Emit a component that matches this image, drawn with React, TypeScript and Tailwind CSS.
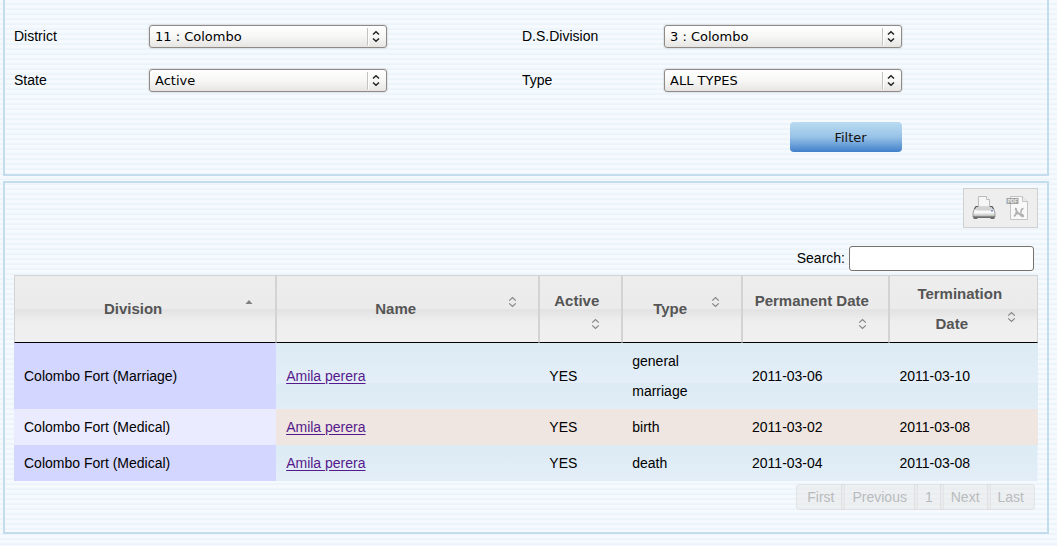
import { useState } from "react";

type Key = "division" | "name" | "active" | "type" | "permanent" | "termination";
type Row = Record<Key, string>;

const columns: { key: Key; label: string; width: string }[] = [
  { key: "division", label: "Division", width: "w-[25.6%]" },
  { key: "name", label: "Name", width: "w-[25.7%]" },
  { key: "active", label: "Active", width: "w-[8.1%]" },
  { key: "type", label: "Type", width: "w-[11.7%]" },
  { key: "permanent", label: "Permanent Date", width: "w-[14.4%]" },
  { key: "termination", label: "Termination Date", width: "w-[14.5%]" },
];

const records: Row[] = [
  { division: "Colombo Fort (Marriage)", name: "Amila perera", active: "YES", type: "general marriage", permanent: "2011-03-06", termination: "2011-03-10" },
  { division: "Colombo Fort (Medical)", name: "Amila perera", active: "YES", type: "birth", permanent: "2011-03-02", termination: "2011-03-08" },
  { division: "Colombo Fort (Medical)", name: "Amila perera", active: "YES", type: "death", permanent: "2011-03-04", termination: "2011-03-08" },
];

const pages = ["First", "Previous", "1", "Next", "Last"];

function SelectField({ id, label, options }: { id: string; label: string; options: string[] }) {
  return (
    <>
      <label htmlFor={id}>{label}</label>
      <div className="relative w-[238px]">
        <select
          id={id}
          className="block h-[23px] w-full appearance-none rounded-[3px] border border-[#8f8a85] bg-linear-to-b from-white via-[#f7f7f6] to-[#e6e5e3] pt-px pr-6 pl-[5px] font-['DejaVu_Sans',sans-serif] text-[13px] leading-5 text-black shadow-[0_0_1px_1px_rgba(0,0,0,0.08)]"
        >
          {options.map((o) => (
            <option key={o}>{o}</option>
          ))}
        </select>
        <svg className="pointer-events-none absolute top-[2px] right-1 h-[19px] w-4" viewBox="0 0 16 19" fill="none" aria-hidden="true">
          <path d="M0.5 1V18.5" stroke="#c4c2c0" />
          <path d="M1.500 1V18.5" stroke="#fff" />
          <path d="M6 7.5L9 4.8L12 7.5M6 11.500L9 14.200L12 11.500" stroke="#222" strokeWidth="1.500" />
        </svg>
      </div>
    </>
  );
}

function SortIcon({ dir }: { dir: "asc" | "desc" | null }) {
  return (
    <svg className="float-right size-4" viewBox="0 0 16 16" fill="none" aria-hidden="true">
      {dir === "asc" && <path d="M4.500 10L8 6L11.500 10Z" fill="#808080" />}
      {dir === "desc" && <path d="M4.500 6L8 10L11.500 6Z" fill="#808080" />}
      {dir === null && <path d="M5.200 6.600L8.500 3.500L11.800 6.600M5.200 9.400L8.500 12.500L11.800 9.400" stroke="#858585" strokeWidth="1.200" />}
    </svg>
  );
}

function PrinterIcon() {
  return (
    <svg className="block h-[26px] w-[26px]" viewBox="0 0 26 26" aria-hidden="true">
      <defs>
        <linearGradient id="printerBody" x1="0" y1="0" x2="0" y2="1">
          <stop offset="0" stopColor="#c4c4c4" />
          <stop offset="0.35" stopColor="#e4e4e4" />
          <stop offset="0.6" stopColor="#f8f8f8" />
          <stop offset="1" stopColor="#a8a8a8" />
        </linearGradient>
      </defs>
      <path d="M7.500 12V1.500H15.500L18.500 4.500V12Z" fill="#f6f6f6" stroke="#bdbdbd" />
      <path d="M15.500 1.500V4.500H18.500" fill="#fff" stroke="#bdbdbd" />
      <path d="M5 11.500H7L8 13H18L19 11.500H21L22.500 13.500L24 18V22H2V18L3.500 13.500Z" fill="url(#printerBody)" stroke="#9a9a9a" />
      <path d="M3.500 14L5 11.500H7M19 11.500H21L22.500 14" fill="none" stroke="#5f5f5f" strokeWidth="1.200" />
      <path d="M7 12L6 15.500H20L19 12Z" fill="#d2d2d2" />
      <path d="M3 16.500H23" stroke="#fbfbfb" strokeWidth="1.500" />
      <path d="M2 21.500H24V22.500L23 24H20L19 23H7L6 24H3L2 22.500Z" fill="#6c6c6c" />
      <rect x="20" y="15" width="2" height="1.500" fill="#6f92d4" />
    </svg>
  );
}

function PdfIcon() {
  return (
    <svg className="block h-[26px] w-[26px]" viewBox="0 0 26 26" aria-hidden="true">
      <path d="M5.500 1.500H17.500L22.500 6.500V24.500H5.500Z" fill="#f8f8f8" stroke="#c4c4c4" />
      <path d="M17.500 1.500V6.500H22.500" fill="#ececec" stroke="#c4c4c4" />
      <rect x="1.500" y="3" width="12" height="6" fill="#a2a2a2" />
      <text x="7.500" y="7.900" fontSize="5" fontWeight="700" textAnchor="middle" fill="#ededed" fontFamily="Liberation Sans, sans-serif">PDF</text>
      <path d="M10 13.500C11.500 13 12 15 11 18C10.500 20.500 9 22 9.500 20.500C10.500 18.500 13 18 16 19C19 20 19 22 17.500 21.500C15.500 20.500 13 18 10 13.500M18.500 13.500C17 13.500 16 15 16 17V21.500" fill="none" stroke="#b0b0b0" strokeWidth="1.400" />
    </svg>
  );
}

export default function App() {
  const [query, setQuery] = useState("");
  const [sort, setSort] = useState<{ key: Key; dir: "asc" | "desc" }>({ key: "division", dir: "asc" });

  const rows = records
    .filter((r) => Object.values(r).join(" ").toLowerCase().includes(query.toLowerCase()))
    .sort((a, b) => a[sort.key].localeCompare(b[sort.key]) * (sort.dir === "asc" ? 1 : -1));

  const toggle = (key: Key) =>
    setSort((s) => ({ key, dir: s.key === key && s.dir === "asc" ? "desc" : "asc" }));

  return (
    <main className="min-h-screen bg-[repeating-linear-gradient(to_bottom,#f6fafe_0px,#f6fafe_2px,#f1f8fc_3px,#ebf4fa_4px,#ebf4fa_5px)] pr-2 pb-3 pl-[3px] font-['Liberation_Sans',sans-serif] text-[14px] text-black">
      <form
        className="mb-[5px] border-x-2 border-b-2 border-[#c3ddec] px-[9px] pt-[14px] pb-[22px]"
        onSubmit={(e) => e.preventDefault()}
      >
        <div className="grid grid-cols-[135fr_373fr_142fr_374fr] auto-rows-[44px] items-center">
          <SelectField id="district" label="District" options={["11 : Colombo"]} />
          <SelectField id="ds-division" label="D.S.Division" options={["3 : Colombo"]} />
          <SelectField id="state" label="State" options={["Active", "Inactive"]} />
          <SelectField id="type" label="Type" options={["ALL TYPES", "BIRTH", "DEATH", "MARRIAGE"]} />
        </div>
        <div className="mt-5 grid grid-cols-[650fr_374fr]">
          <div className="col-start-2 flex w-[238px] justify-end">
            <button
              type="submit"
              className="h-[30px] w-28 rounded-[4px] bg-linear-to-b from-[#badcf1] via-[#98c2e7] to-[#4080ca] pt-[2px] pl-[9px] font-['DejaVu_Sans',sans-serif] text-[13px] text-[#111]"
            >
              Filter
            </button>
          </div>
        </div>
      </form>

      <section className="border-2 border-[#c3ddec] px-[9px] pt-[5px] pb-[22px]">
        <div className="flex justify-end">
          <div className="flex h-10 w-[75px] items-center justify-center gap-2 border border-[#d0d0d0] bg-[#eeeeee]">
            <button type="button" aria-label="Print"><PrinterIcon /></button>
            <button type="button" aria-label="Save as PDF"><PdfIcon /></button>
          </div>
        </div>

        <div className="mt-[18px] mb-1 flex items-center justify-end gap-1 pr-1">
          <label htmlFor="search">Search:</label>
          <input
            id="search"
            type="text"
            value={query}
            onChange={(e) => setQuery(e.target.value)}
            className="h-[25px] w-[185px] rounded-[3px] border border-[#77716c] bg-white px-1"
          />
        </div>

        <table className="w-full table-fixed border-separate border-spacing-0 text-left leading-[30px]">
          <thead>
            <tr>
              {columns.map((c) => {
                const dir = sort.key === c.key ? sort.dir : null;
                return (
                  <th
                    key={c.key}
                    scope="col"
                    aria-sort={dir === "asc" ? "ascending" : dir === "desc" ? "descending" : "none"}
                    className={`${c.width} border border-[#d3d3d3] border-b-black bg-[linear-gradient(to_bottom,#ededed_0%,#ebebeb_50%,#e2e2e2_51%,#eeeeee_68%,#f0f0f0_100%)] py-[3px] pr-[18px] pl-[10px] text-[15px] font-bold text-[#555555]`}
                  >
                    <button type="button" onClick={() => toggle(c.key)} className="block w-full cursor-pointer text-center">
                      {c.label}
                      <SortIcon dir={dir} />
                    </button>
                  </th>
                );
              })}
            </tr>
          </thead>
          <tbody>
            {rows.map((r, i) => (
              <tr
                key={r.type}
                className={i % 2 === 0 ? "bg-[linear-gradient(to_bottom,#dcebf4,#e4eef8)] bg-[length:100%_40px]" : "bg-[#efe6e1]"}
              >
                {columns.map((c) => (
                  <td
                    key={c.key}
                    className={`px-[10px] py-[3px] ${c.key === sort.key ? (i % 2 === 0 ? "bg-[#d3d6ff]" : "bg-[#eaebff]") : ""}`}
                  >
                    {c.key === "name" ? (
                      <a href="#registrar" className="text-[#551a8b] underline underline-offset-2">{r.name}</a>
                    ) : c.key === "type" ? (
                      r.type.split(" ").map((t) => <div key={t}>{t}</div>)
                    ) : (
                      r[c.key]
                    )}
                  </td>
                ))}
              </tr>
            ))}
          </tbody>
        </table>

        <nav aria-label="Pagination" className="mt-[3px] flex justify-end pr-[3px]">
          {pages.map((p) => (
            <button
              key={p}
              type="button"
              disabled
              className="-ml-1 h-[26px] border border-[#c8cccc]/30 bg-[#e6e6e6]/50 px-[10px] text-[#b8bbbd] first:ml-0 first:rounded-l-[4px] last:rounded-r-[4px]"
            >
              {p}
            </button>
          ))}
        </nav>
      </section>
    </main>
  );
}
